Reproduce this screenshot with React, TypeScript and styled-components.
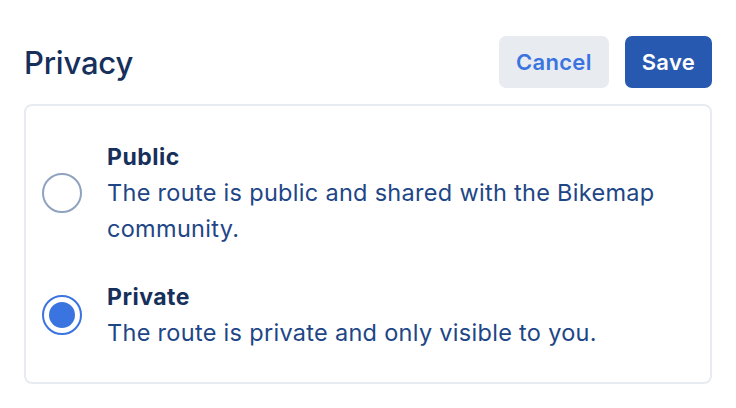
import React, { useState } from "react";
import styled, { createGlobalStyle } from "styled-components";

const GlobalStyle = createGlobalStyle`
  html, body {
    margin: 0;
    padding: 0;
    background: #ffffff;
    font-family: Inter, "Noto Sans", "Liberation Sans", sans-serif;
  }
`;

const Page = styled.div`
  padding: 36px 24px 0 24px;
  width: 736px;
  box-sizing: border-box;
`;

const Header = styled.div`
  display: flex;
  align-items: center;
  justify-content: space-between;
  margin-bottom: 16px;
`;

const Title = styled.h2`
  margin: 0;
  font-size: 31px;
  font-weight: 500;
  color: #16305b;
  letter-spacing: -0.2px;
`;

const Actions = styled.div`
  display: flex;
  gap: 16px;
`;

const Button = styled.button<{ $primary?: boolean }>`
  height: 52px;
  padding: 0 17px;
  border: none;
  border-radius: 7px;
  font-family: inherit;
  font-size: 22px;
  font-weight: 600;
  letter-spacing: 0.3px;
  cursor: pointer;
  background: ${(p) => (p.$primary ? "#2759b1" : "#e8ecf0")};
  color: ${(p) => (p.$primary ? "#ffffff" : "#3a74e0")};
`;

const Card = styled.div`
  border: 2px solid #e8ecf0;
  border-radius: 8px;
  padding: 33px 16px 31px 16px;
  display: flex;
  flex-direction: column;
  gap: 32px;
`;

const Option = styled.label`
  display: flex;
  align-items: center;
  gap: 25px;
  cursor: pointer;
`;

const Radio = styled.span<{ $checked?: boolean }>`
  flex: none;
  width: 40px;
  height: 40px;
  box-sizing: border-box;
  border-radius: 50%;
  border: 2px solid ${(p) => (p.$checked ? "#3a74e0" : "#8fa3bf")};
  display: grid;
  place-items: center;

  &::after {
    content: "";
    width: 26px;
    height: 26px;
    border-radius: 50%;
    background: #3a74e0;
    display: ${(p) => (p.$checked ? "block" : "none")};
  }
`;

const OptionText = styled.div`
  display: flex;
  flex-direction: column;
`;

const OptionTitle = styled.span`
  font-size: 23px;
  line-height: 36px;
  font-weight: 700;
  letter-spacing: 0.5px;
  color: #16305b;
`;

const OptionDesc = styled.span`
  font-size: 23.5px;
  line-height: 36px;
  letter-spacing: 0.3px;
  color: #1e4686;
`;

const options = [
  {
    id: "public",
    title: "Public",
    desc: "The route is public and shared with the Bikemap community.",
  },
  {
    id: "private",
    title: "Private",
    desc: "The route is private and only visible to you.",
  },
];

const App: React.FC = () => {
  const [value, setValue] = useState("private");

  return (
    <Page>
      <GlobalStyle />
      <Header>
        <Title>Privacy</Title>
        <Actions>
          <Button>Cancel</Button>
          <Button $primary>Save</Button>
        </Actions>
      </Header>
      <Card>
        {options.map((o) => (
          <Option key={o.id} onClick={() => setValue(o.id)}>
            <Radio $checked={value === o.id} />
            <OptionText>
              <OptionTitle>{o.title}</OptionTitle>
              <OptionDesc>{o.desc}</OptionDesc>
            </OptionText>
          </Option>
        ))}
      </Card>
    </Page>
  );
};

export default App;
